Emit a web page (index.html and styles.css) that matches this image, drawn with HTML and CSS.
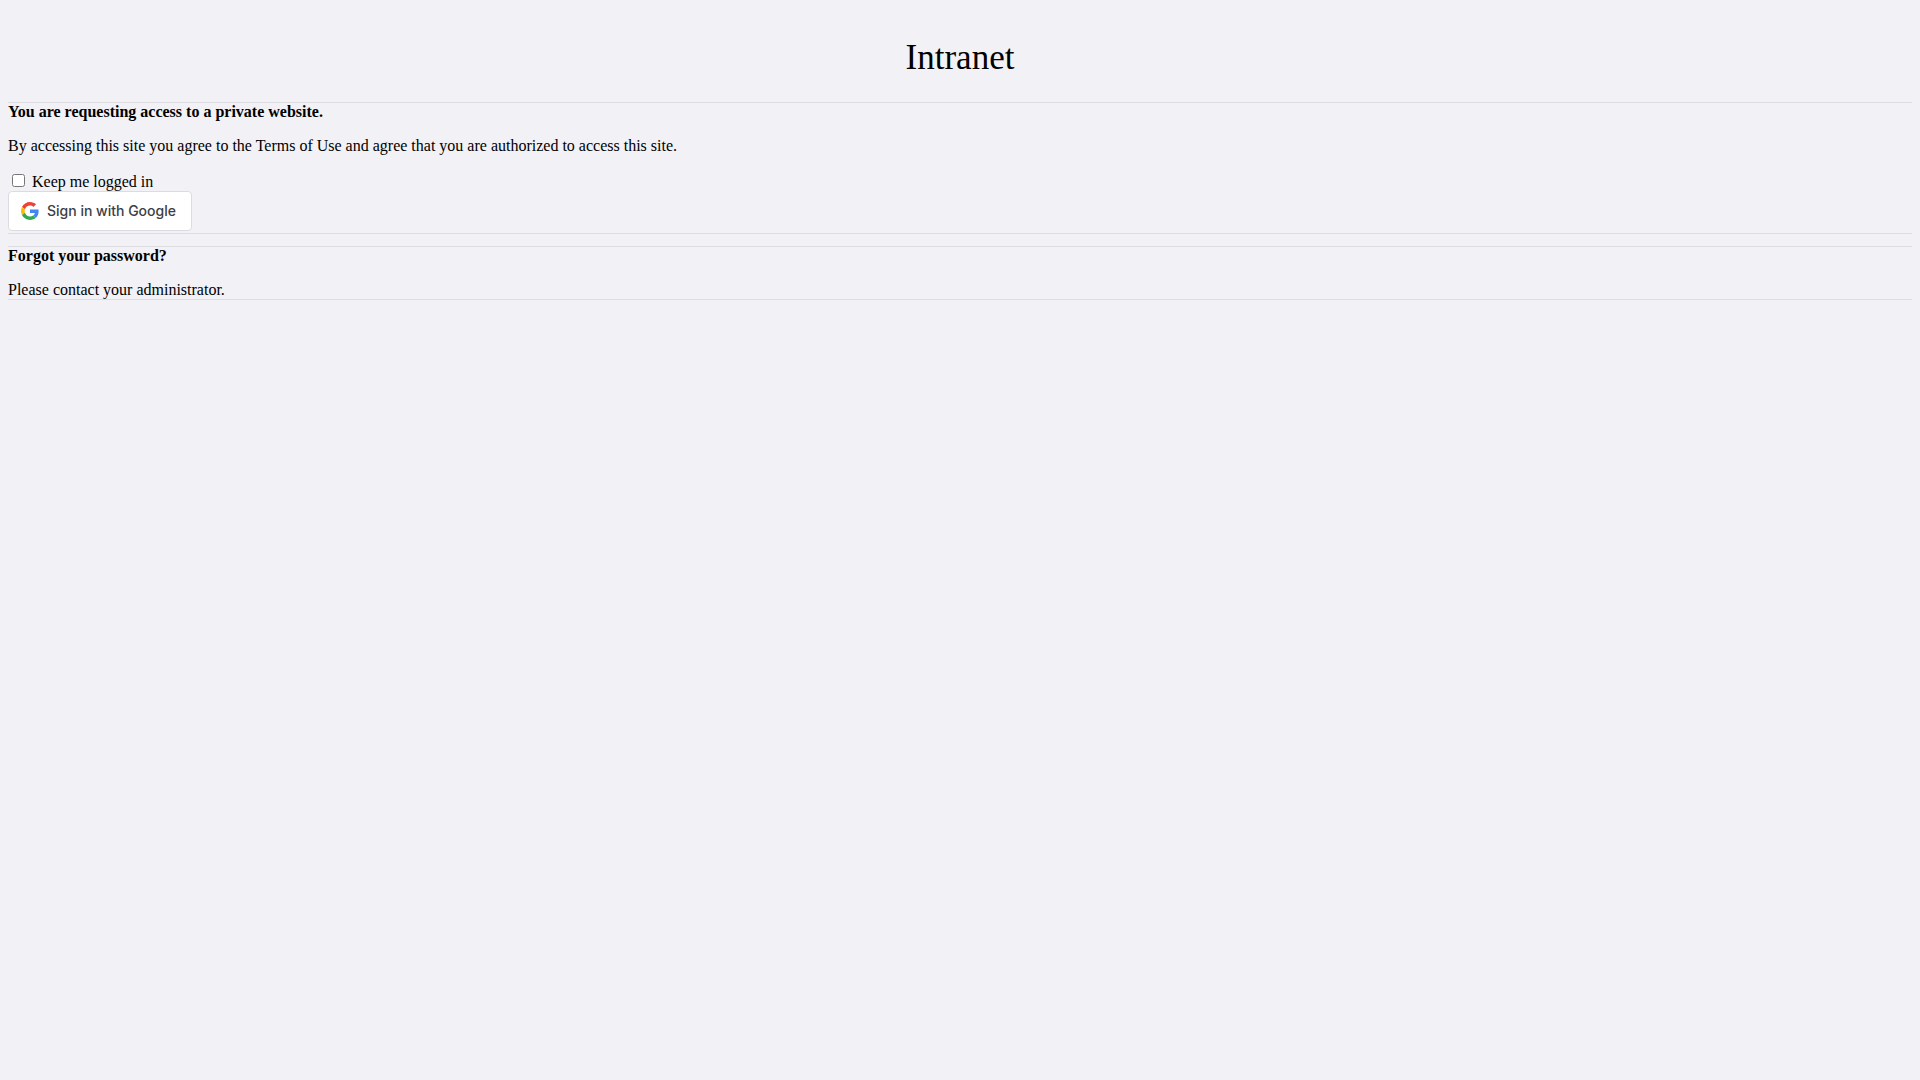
FILE: index.html
```html
<!DOCTYPE html>
<html lang="en">
<head>
<meta charset="utf-8">
<title>Intranet</title>
<link rel="stylesheet" href="styles.css">
</head>
<body>
<main class="login">
  <h1 class="login-title">Intranet</h1>
  <section class="card">
    <p class="card-heading">You are requesting access to a private website.</p>
    <p class="card-text">By accessing this site you agree to the Terms of Use and agree that you are authorized to access this site.</p>
    <form class="login-form">
      <div class="remember">
        <input type="checkbox" id="remember">
        <label for="remember">Keep me logged in</label>
      </div>
      <button type="button" class="google-button">
        <svg class="google-icon" viewBox="0 0 48 48" aria-hidden="true">
          <path fill="#EA4335" d="M24 9.5c3.54 0 6.71 1.22 9.21 3.6l6.85-6.85C35.9 2.38 30.47 0 24 0 14.62 0 6.51 5.38 2.56 13.22l7.98 6.19C12.43 13.72 17.74 9.5 24 9.5z"/>
          <path fill="#4285F4" d="M46.98 24.55c0-1.57-.15-3.09-.38-4.55H24v9.02h12.94c-.58 2.96-2.26 5.48-4.78 7.18l7.73 6c4.51-4.18 7.09-10.36 7.09-17.65z"/>
          <path fill="#FBBC05" d="M10.53 28.59c-.48-1.45-.76-2.99-.76-4.59s.27-3.14.76-4.59l-7.98-6.19C.92 16.46 0 20.12 0 24c0 3.88.92 7.54 2.56 10.78l7.97-6.19z"/>
          <path fill="#34A853" d="M24 48c6.48 0 11.93-2.13 15.89-5.81l-7.73-6c-2.15 1.45-4.92 2.3-8.16 2.3-6.26 0-11.57-4.22-13.47-9.91l-7.98 6.19C6.51 42.62 14.62 48 24 48z"/>
        </svg>
        <span>Sign in with Google</span>
      </button>
    </form>
  </section>
  <section class="card">
    <p class="card-heading">Forgot your password?</p>
    <p class="card-text">Please contact your administrator.</p>
  </section>
</main>
</body>
</html>
```

FILE: styles.css
```css
body {
  margin: 8px;
  background: #f1f1f6;
  color: #000;
  font: 16px/18px "Liberation Serif", "Times New Roman", serif;
}

.login-title {
  margin: 0;
  padding: 28px 0 22px;
  font-size: 35px;
  font-weight: 400;
  line-height: 44px;
  text-align: center;
}

.card {
  margin-bottom: 12px;
  border-top: 1px solid #dddde2;
  border-bottom: 1px solid #dddde2;
}

.card-heading {
  margin: 0 0 16px;
  font-weight: 700;
}

.card-text {
  margin: 0;
}

.login-form {
  margin: 16px 0 0;
  padding-bottom: 2px;
}

.google-button {
  display: flex;
  align-items: center;
  gap: 8px;
  min-width: 184px;
  height: 40px;
  padding: 0 12px;
  border: 1px solid #dadce0;
  border-radius: 4px;
  background: #fff;
  color: #3c4043;
  font: 500 14px/20px Inter, sans-serif;
}

.google-icon {
  width: 18px;
  height: 18px;
}
```
